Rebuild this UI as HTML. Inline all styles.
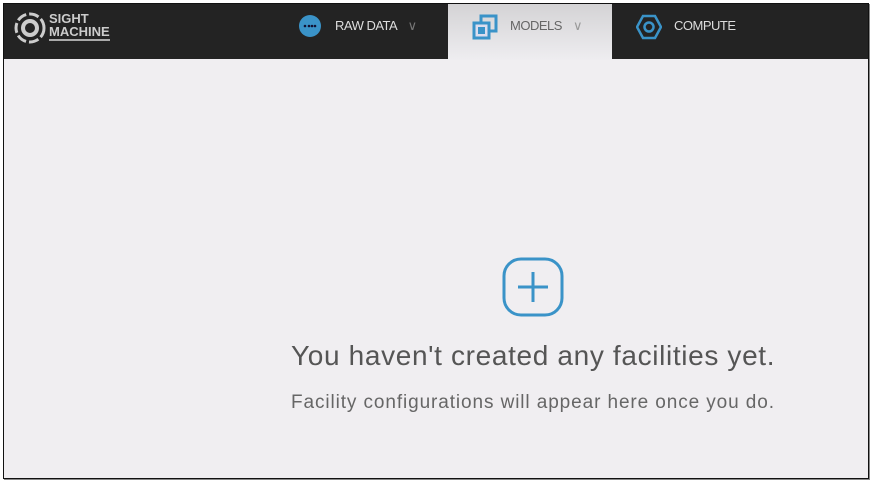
<!DOCTYPE html>
<html><head><style>
body{margin:0;width:874px;height:486px;background:#fff;position:relative;overflow:hidden;font-family:"Liberation Sans",sans-serif}
#f{position:absolute;left:3px;top:3px;width:864px;height:474px;border:1px solid #111;background:#f0eef1;box-shadow:1px 1px 0 #888}
#h{position:absolute;left:0;top:0;width:864px;height:55px;background:#232323}
.t{position:absolute;top:0;height:55px;font-size:13px;color:#ddd;letter-spacing:-0.5px}
#m{position:absolute;left:444px;top:0;width:164px;height:56px;background:linear-gradient(#d4d3d5,#eeedf0)}
</style></head><body>
<div id="f">
<div id="h">
 <svg style="position:absolute;left:9px;top:7px" width="34" height="34" viewBox="0 0 34 34"><circle cx="17" cy="17" r="14" fill="none" stroke="#ccc" stroke-width="3" stroke-dasharray="10 3"/><circle cx="17" cy="17" r="7" fill="none" stroke="#ccc" stroke-width="4"/></svg>
 <div style="position:absolute;left:45px;top:8px;color:#ccc;font-weight:bold;font-size:13px;line-height:13px">SIGHT<br><span style="border-bottom:2px solid #aaa">MACHINE</span></div>
 <svg style="position:absolute;left:294px;top:10px" width="24" height="24"><circle cx="12" cy="12" r="11" fill="#3a93c8"/><circle cx="7" cy="12" r="1.3" fill="#113"/><circle cx="11" cy="12" r="1.3" fill="#113"/><circle cx="14" cy="12" r="1.3" fill="#113"/><circle cx="17" cy="12" r="1.3" fill="#113"/></svg>
 <div class="t" style="left:331px;top:14px">RAW DATA <span style="color:#777;margin-left:8px">&#8744;</span></div>
 <div id="m">
  <svg style="position:absolute;left:24px;top:10px" width="26" height="26"><rect x="9" y="2" width="15" height="15" fill="none" stroke="#3a93c8" stroke-width="3"/><rect x="2" y="9" width="15" height="15" fill="#dde" stroke="#3a93c8" stroke-width="3"/><rect x="6" y="13" width="7" height="7" fill="#3a93c8"/></svg>
  <div class="t" style="left:62px;top:14px;color:#666">MODELS <span style="color:#999;margin-left:8px">&#8744;</span></div>
 </div>
 <svg style="position:absolute;left:632px;top:10px" width="26" height="26"><polygon points="7,2 19,2 25,13 19,24 7,24 1,13" fill="none" stroke="#3a93c8" stroke-width="2.5"/><circle cx="13" cy="13" r="4.5" fill="none" stroke="#3a93c8" stroke-width="2.5"/></svg>
 <div class="t" style="left:670px;top:14px">COMPUTE</div>
</div>
<svg style="position:absolute;left:498px;top:253px" width="64" height="62"><rect x="2" y="2" width="58" height="56" rx="17" fill="none" stroke="#3a93c8" stroke-width="3"/><path d="M16 30H46M31 15V45" stroke="#3a93c8" stroke-width="3"/></svg>
<div style="position:absolute;left:287px;top:336px;font-size:28px;letter-spacing:0.65px;color:#555;white-space:nowrap">You haven't created any facilities yet.</div>
<div style="position:absolute;left:287px;top:388px;font-size:19px;letter-spacing:0.9px;color:#666;white-space:nowrap">Facility configurations will appear here once you do.</div>
</div>
</body></html>
